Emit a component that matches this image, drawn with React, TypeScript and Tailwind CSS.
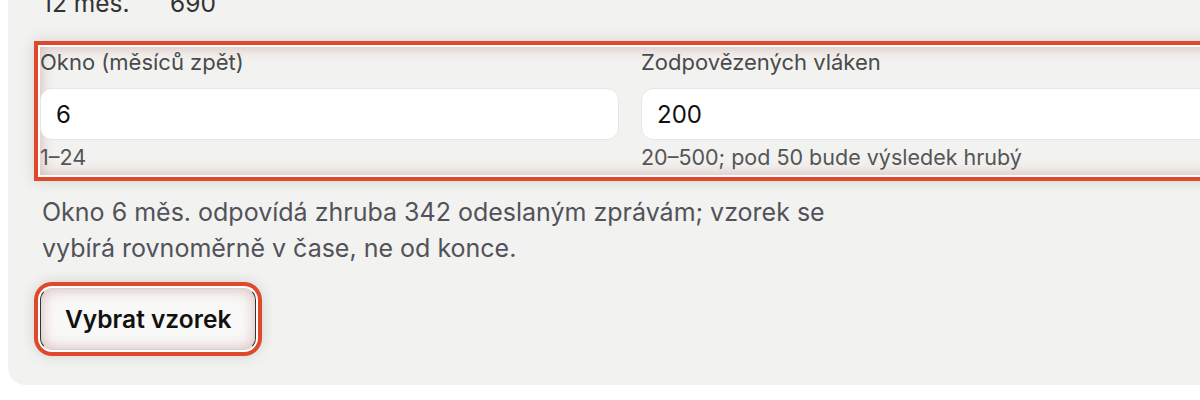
import React from "react";

const highlight =
  "shadow-[inset_0_0_14px_rgba(150,60,50,0.35),0_0_0_2px_#ffffff,0_0_0_6px_#e0482b,0_0_14px_6px_rgba(0,0,0,0.13)]";

const Field = ({ label, value, hint }: { label: string; value: string; hint: string }) => (
  <div className="flex flex-col">
    <label className="text-[22px] leading-[30px] text-[#4a4a4a]">{label}</label>
    <input
      readOnly
      value={value}
      className="mt-[11px] h-[52px] w-full rounded-[12px] border border-[#e6e6e4] bg-white px-[15px] text-[24px] text-[#111] outline-none"
    />
    <p className="mt-[2px] text-[21.5px] leading-[30px] text-[#555]">{hint}</p>
  </div>
);

export default function App() {
  return (
    <div
      className="h-[400px] overflow-hidden bg-white pl-2"
      style={{ fontFamily: "Inter, 'Noto Sans', sans-serif" }}
    >
      <div className="-mt-[40px] w-[1260px] rounded-bl-[18px] bg-[#f2f2f0] pb-[35px] pl-[32px] pt-[29px]">
        <div className="flex text-[24.5px] leading-[28px] text-[#333]">
          <span className="w-[130px] pl-[2px]">12 měs.</span>
          <span>690</span>
        </div>

        <div className={`mt-[30px] grid w-[1180px] grid-cols-2 gap-x-[22px] pb-[3px] ${highlight}`}>
          <Field label="Okno (měsíců zpět)" value="6" hint="1–24" />
          <Field label="Zodpovězených vláken" value="200" hint="20–500; pod 50 bude výsledek hrubý" />
        </div>

        <p className="mt-[19px] max-w-[830px] pl-[2px] text-[25px] leading-[36px] text-[#52525a]">
          Okno 6 měs. odpovídá zhruba 342 odeslaným zprávám; vzorek se vybírá rovnoměrně v čase, ne od konce.
        </p>

        <button
          className={`mt-[22px] h-[62px] rounded-[12px] border border-[#333] border-y-[#d6d4d2] bg-[#f8f8f7] px-[24px] text-[24.5px] font-semibold text-[#111] ${highlight}`}
        >
          Vybrat vzorek
        </button>
      </div>
    </div>
  );
}
